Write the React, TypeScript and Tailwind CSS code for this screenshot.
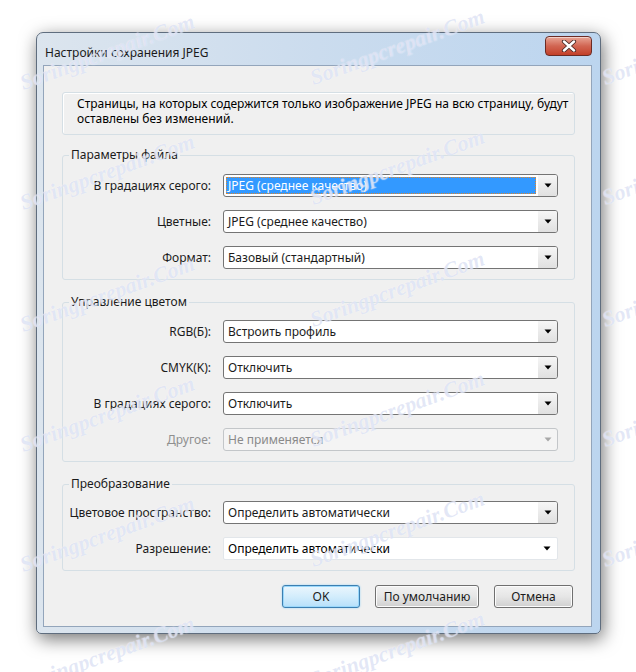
import React from "react";

const UI_FONT = "font-['Noto_Sans','Open_Sans',sans-serif]";

/* watermark positions: left column, middle column, right column */
const marks = [
  "left-[25px] top-[71px]",
  "left-[315px] top-[66px]",
  "left-[607px] top-[66px]",
  "left-[25px] top-[191px]",
  "left-[315px] top-[186px]",
  "left-[607px] top-[186px]",
  "left-[25px] top-[313px]",
  "left-[315px] top-[308px]",
  "left-[607px] top-[308px]",
  "left-[25px] top-[433px]",
  "left-[315px] top-[428px]",
  "left-[607px] top-[428px]",
  "left-[25px] top-[553px]",
  "left-[315px] top-[548px]",
  "left-[607px] top-[548px]",
  "left-[25px] top-[673px]",
  "left-[315px] top-[668px]",
];

export default function App() {
  return (
    <div className={`relative w-[636px] h-[672px] overflow-hidden bg-white text-[12px] text-black ${UI_FONT}`}>
      <div className="pl-[36px] pt-[32px]">
        <Window />
      </div>

      {/* watermark overlay */}
      <div className="pointer-events-none absolute inset-0">
        {marks.map((pos) => (
          <span
            key={pos}
            className={`absolute ${pos} origin-[0_100%] -rotate-[20deg] whitespace-nowrap font-['Liberation_Serif',serif] text-[22px] leading-[24px] font-bold italic text-[#8fa2dc]/25 [text-shadow:0_0_1px_rgba(255,255,255,0.9)]`}
          >
            Soringpcrepair.Com
          </span>
        ))}
      </div>
    </div>
  );
}

function Window() {
  return (
    <div className="w-[565px] h-[602px] rounded-t-[7px] rounded-b-[5px] border border-[#5f6d7e] bg-linear-to-r from-[#dce5ee] via-[#cbdcee] to-[#bcd5ef] shadow-[2px_5px_18px_rgba(0,0,0,0.55)] flex flex-col pl-[6px] pr-[8px] pb-[6px]">
      {/* TITLE BAR */}
      <div className="h-[32px] flex items-start justify-between">
        <span className="pt-[12px] pl-[2px] leading-[15px] text-[#1b1b1b]">Настройки сохранения JPEG</span>
        <CloseButton />
      </div>

      {/* CLIENT AREA */}
      <div className="flex-1 border border-[#93a5bb] bg-[#f0f0f0] pl-[18px] pr-[16px] pt-[26px]">
        <div className="h-[43px] rounded-[3px] border border-[#d5dfe5] shadow-[inset_1px_1px_0_#fff] pl-[14px] pt-[3px] leading-[15px]">
          Страницы, на которых содержится только изображение JPEG на всю страницу, будут
          <br />
          оставлены без изменений.
        </div>

        <Group title="Параметры файла" className="mt-[12px]" top="pt-[11px]">
          <Row label="В градациях серого:" value="JPEG (среднее качество)" variant="selected" />
          <Row label="Цветные:" value="JPEG (среднее качество)" />
          <Row label="Формат:" value="Базовый (стандартный)" />
        </Group>

        <Group title="Управление цветом" className="mt-[14px]" top="pt-[10px]">
          <Row label="RGB(Б):" value="Встроить профиль" />
          <Row label="CMYK(K):" value="Отключить" />
          <Row label="В градациях серого:" value="Отключить" />
          <Row label="Другое:" value="Не применяется" variant="disabled" />
        </Group>

        <Group title="Преобразование" className="mt-[14px]" top="pt-[9px]">
          <Row label="Цветовое пространство:" value="Определить автоматически" />
          <Row label="Разрешение:" value="Определить автоматически" variant="flat" />
        </Group>

        <div className="mt-[14px] flex justify-end gap-[15px] pr-[2px]">
          <Button primary className="w-[78px]">OK</Button>
          <Button className="w-[104px]">По умолчанию</Button>
          <Button className="w-[79px]">Отмена</Button>
        </div>
      </div>
    </div>
  );
}

/* ---------------- UI COMPONENTS ---------------- */

function CloseButton() {
  return (
    <div className="mt-[3px] w-[47px] h-[20px] rounded-[4px] border border-[#6b2b24] bg-linear-to-b from-[#e8a596] via-[#d16552] to-[#c33f28] shadow-[inset_0_1px_0_rgba(255,255,255,0.5)] flex items-center justify-center">
      <svg width="16" height="12" viewBox="0 0 16 12">
        <path d="M3 1.5 L13 10.5 M13 1.5 L3 10.5" stroke="#4a2a26" strokeWidth="4.2" strokeLinecap="round" />
        <path d="M3 1.5 L13 10.5 M13 1.5 L3 10.5" stroke="#ffffff" strokeWidth="2.4" strokeLinecap="round" />
      </svg>
    </div>
  );
}

function Group({
  title,
  className,
  top,
  children,
}: {
  title: string;
  className?: string;
  top: string;
  children: React.ReactNode;
}) {
  return (
    <fieldset className={`rounded-[3px] border border-[#d5dfe5] pr-[16px] pb-[10px] ${className ?? ""}`}>
      <legend className="ml-[6px] px-[2px] leading-[16px] text-[#1b1b1b]">{title}</legend>
      <div className={`grid grid-cols-[148px_335px] gap-x-[12px] gap-y-[13px] items-center ${top}`}>
        {children}
      </div>
    </fieldset>
  );
}

type Variant = "normal" | "selected" | "disabled" | "flat";

function Row({ label, value, variant = "normal" }: { label: string; value: string; variant?: Variant }) {
  return (
    <>
      <span className={`text-right leading-[16px] ${variant === "disabled" ? "text-[#8f8f8f]" : "text-[#1b1b1b]"}`}>
        {label}
      </span>
      <Select value={value} variant={variant} />
    </>
  );
}

function Arrow({ color }: { color: string }) {
  return (
    <svg width="8" height="5" viewBox="0 0 8 5">
      <path d="M0.5 0.5 H7.5 L4 4.5 Z" fill={color} />
    </svg>
  );
}

function Select({ value, variant }: { value: string; variant: Variant }) {
  if (variant === "flat") {
    return (
      <div className="h-[23px] rounded-[2px] border border-[#e2e6ea] bg-white flex items-center">
        <span className="flex-1 pl-[4px] leading-[16px]">{value}</span>
        <span className="w-[20px] flex items-center justify-center">
          <Arrow color="#000" />
        </span>
      </div>
    );
  }

  const disabled = variant === "disabled";

  return (
    <div
      className={`h-[23px] rounded-[3px] border flex items-stretch ${
        disabled ? "border-[#c3c6c9] bg-[#f4f4f4]" : "border-[#747474] bg-white"
      }`}
    >
      {variant === "selected" ? (
        <div className="flex-1 p-[2px] flex">
          <div className="flex-1 bg-[#3399ff] border border-dotted border-[#e0862c] flex items-center">
            <span className="pl-[1px] leading-[16px] text-white">{value}</span>
          </div>
        </div>
      ) : (
        <div className="flex-1 flex items-center">
          <span className={`pl-[4px] leading-[16px] ${disabled ? "text-[#8a8a8a]" : "text-[#1b1b1b]"}`}>{value}</span>
        </div>
      )}
      <span
        className={`w-[19px] rounded-r-[2px] flex items-center justify-center ${
          disabled ? "" : "bg-linear-to-b from-[#f6f6f6] to-[#e0e0e0]"
        }`}
      >
        <Arrow color={disabled ? "#a8a8a8" : "#000"} />
      </span>
    </div>
  );
}

function Button({
  children,
  primary,
  className,
}: {
  children: React.ReactNode;
  primary?: boolean;
  className?: string;
}) {
  return (
    <button
      className={`h-[23px] rounded-[3px] border leading-[16px] text-[#1b1b1b] ${
        primary
          ? "border-[#3c7fb1] bg-linear-to-b from-[#ebf6fd] via-[#d3edfc] to-[#b6e0fa] shadow-[0_0_2px_#8fd0f5,inset_0_0_0_1px_#9ad8fb]"
          : "border-[#707070] bg-linear-to-b from-[#f2f2f2] via-[#e6e6e6] to-[#d0d0d0] shadow-[inset_0_0_0_1px_#fcfcfc]"
      } ${className ?? ""}`}
    >
      {children}
    </button>
  );
}
